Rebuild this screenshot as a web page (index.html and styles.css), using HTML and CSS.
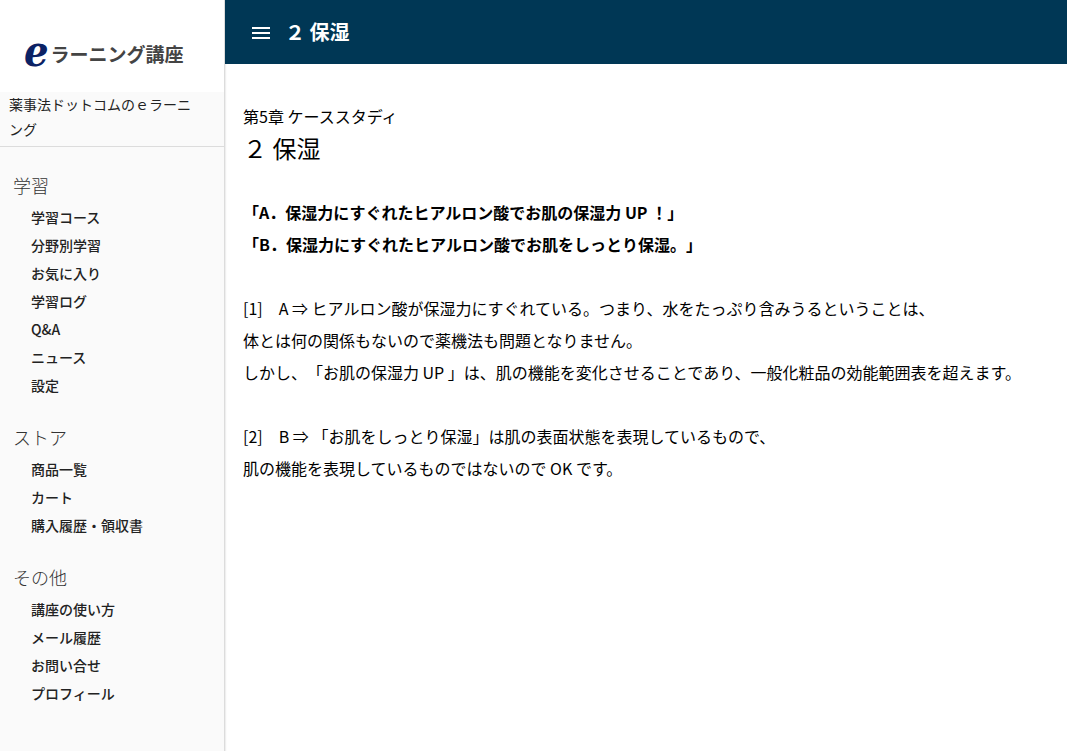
FILE: index.html
```html
<!DOCTYPE html>
<html lang="ja">
<head>
<meta charset="utf-8">
<meta name="viewport" content="width=device-width, initial-scale=1">
<title>２ 保湿</title>
<link rel="stylesheet" href="styles.css">
</head>
<body>
<div class="layout">
  <aside class="sidebar">
    <a class="logo" href="#"><span class="logo-mark">e</span><span class="logo-text">ラーニング講座</span></a>
    <p class="site-name">薬事法ドットコムのｅラーニング</p>
    <nav class="menu">
      <section class="group">
        <h2 class="group-title">学習</h2>
        <ul class="links">
          <li><a href="#">学習コース</a></li>
          <li><a href="#">分野別学習</a></li>
          <li><a href="#">お気に入り</a></li>
          <li><a href="#">学習ログ</a></li>
          <li><a href="#">Q&amp;A</a></li>
          <li><a href="#">ニュース</a></li>
          <li><a href="#">設定</a></li>
        </ul>
      </section>
      <section class="group">
        <h2 class="group-title">ストア</h2>
        <ul class="links">
          <li><a href="#">商品一覧</a></li>
          <li><a href="#">カート</a></li>
          <li><a href="#">購入履歴・領収書</a></li>
        </ul>
      </section>
      <section class="group">
        <h2 class="group-title">その他</h2>
        <ul class="links">
          <li><a href="#">講座の使い方</a></li>
          <li><a href="#">メール履歴</a></li>
          <li><a href="#">お問い合せ</a></li>
          <li><a href="#">プロフィール</a></li>
        </ul>
      </section>
    </nav>
  </aside>
  <div class="page">
    <header class="topbar">
      <button class="menu-button" type="button" aria-label="メニュー">
        <svg width="24" height="24" viewBox="0 0 24 24" fill="currentColor" aria-hidden="true"><path d="M3 19h18v-2H3v2zm0-5h18v-2H3v2zm0-7v2h18V7H3z"/></svg>
      </button>
      <span class="topbar-title">２ 保湿</span>
    </header>
    <main class="content">
      <p class="chapter">第5章 ケーススタディ</p>
      <h1 class="title">２ 保湿</h1>
      <p class="text"><strong>「A．保湿力にすぐれたヒアルロン酸でお肌の保湿力 UP ！」<br>「B．保湿力にすぐれたヒアルロン酸でお肌をしっとり保湿。」</strong></p>
      <p class="text">[1]　A ⇒ ヒアルロン酸が保湿力にすぐれている。つまり、水をたっぷり含みうるということは、<br>体とは何の関係もないので薬機法も問題となりません。<br>しかし、「お肌の保湿力 UP 」は、肌の機能を変化させることであり、一般化粧品の効能範囲表を超えます。</p>
      <p class="text">[2]　B ⇒ 「お肌をしっとり保湿」は肌の表面状態を表現しているもので、<br>肌の機能を表現しているものではないので OK です。</p>
    </main>
  </div>
</div>
</body>
</html>
```
FILE: styles.css
```css
* {
  box-sizing: border-box;
}

body {
  margin: 0;
  font-family: "Noto Sans CJK JP", sans-serif;
  font-size: 16px;
  text-spacing-trim: space-all;
  color: #000;
  background: #fff;
}

h1, h2, p, ul {
  margin: 0;
  padding: 0;
}

a {
  color: inherit;
  text-decoration: none;
}

.layout {
  display: flex;
  min-height: 100vh;
}

.sidebar {
  flex: 0 0 225px;
  background: #fafafa;
  border-right: 1px solid #dcdcdc;
  box-shadow: 0 0 2px rgba(0, 0, 0, 0.2);
}

.logo {
  display: flex;
  align-items: center;
  height: 92px;
  padding: 16px 24px 0;
  background: #fff;
  line-height: 56px;
  white-space: nowrap;
}

.logo-mark {
  padding-bottom: 6px;
  font-family: "DejaVu Serif Condensed", "DejaVu Serif", serif;
  font-size: 43px;
  font-weight: 700;
  font-style: italic;
  color: #0b2265;
}

.logo-text {
  margin-left: 2px;
  font-size: 19px;
  font-weight: 700;
  color: #444;
}

.site-name {
  padding: 0 24px 4px 9px;
  border-bottom: 1px solid #dcdcdc;
  font-size: 14px;
  line-height: 25px;
  color: #222;
}

.menu {
  padding: 24px 13px;
}

.group {
  padding-bottom: 24px;
}

.group-title {
  padding-bottom: 4px;
  font-size: 18px;
  font-weight: 300;
  line-height: 28px;
  color: #333;
}

.links {
  padding-left: 18px;
  list-style: none;
  font-size: 14px;
  font-weight: 500;
  line-height: 28px;
  color: #222;
}

.page {
  flex: 1;
  min-width: 0;
}

.topbar {
  display: flex;
  align-items: center;
  gap: 12px;
  height: 64px;
  padding: 0 24px;
  background: #003755;
  color: #fff;
}

.menu-button {
  display: flex;
  padding: 0;
  border: 0;
  background: none;
  color: inherit;
  cursor: pointer;
}

.topbar-title {
  font-size: 20px;
  font-weight: 700;
  line-height: 32px;
}

.content {
  padding: 36px 18px;
}

.chapter {
  line-height: 32px;
}

.title {
  margin-bottom: 32px;
  font-size: 24px;
  font-weight: 400;
  line-height: 32px;
}

.text {
  margin-bottom: 32px;
  line-height: 32px;
}
```
